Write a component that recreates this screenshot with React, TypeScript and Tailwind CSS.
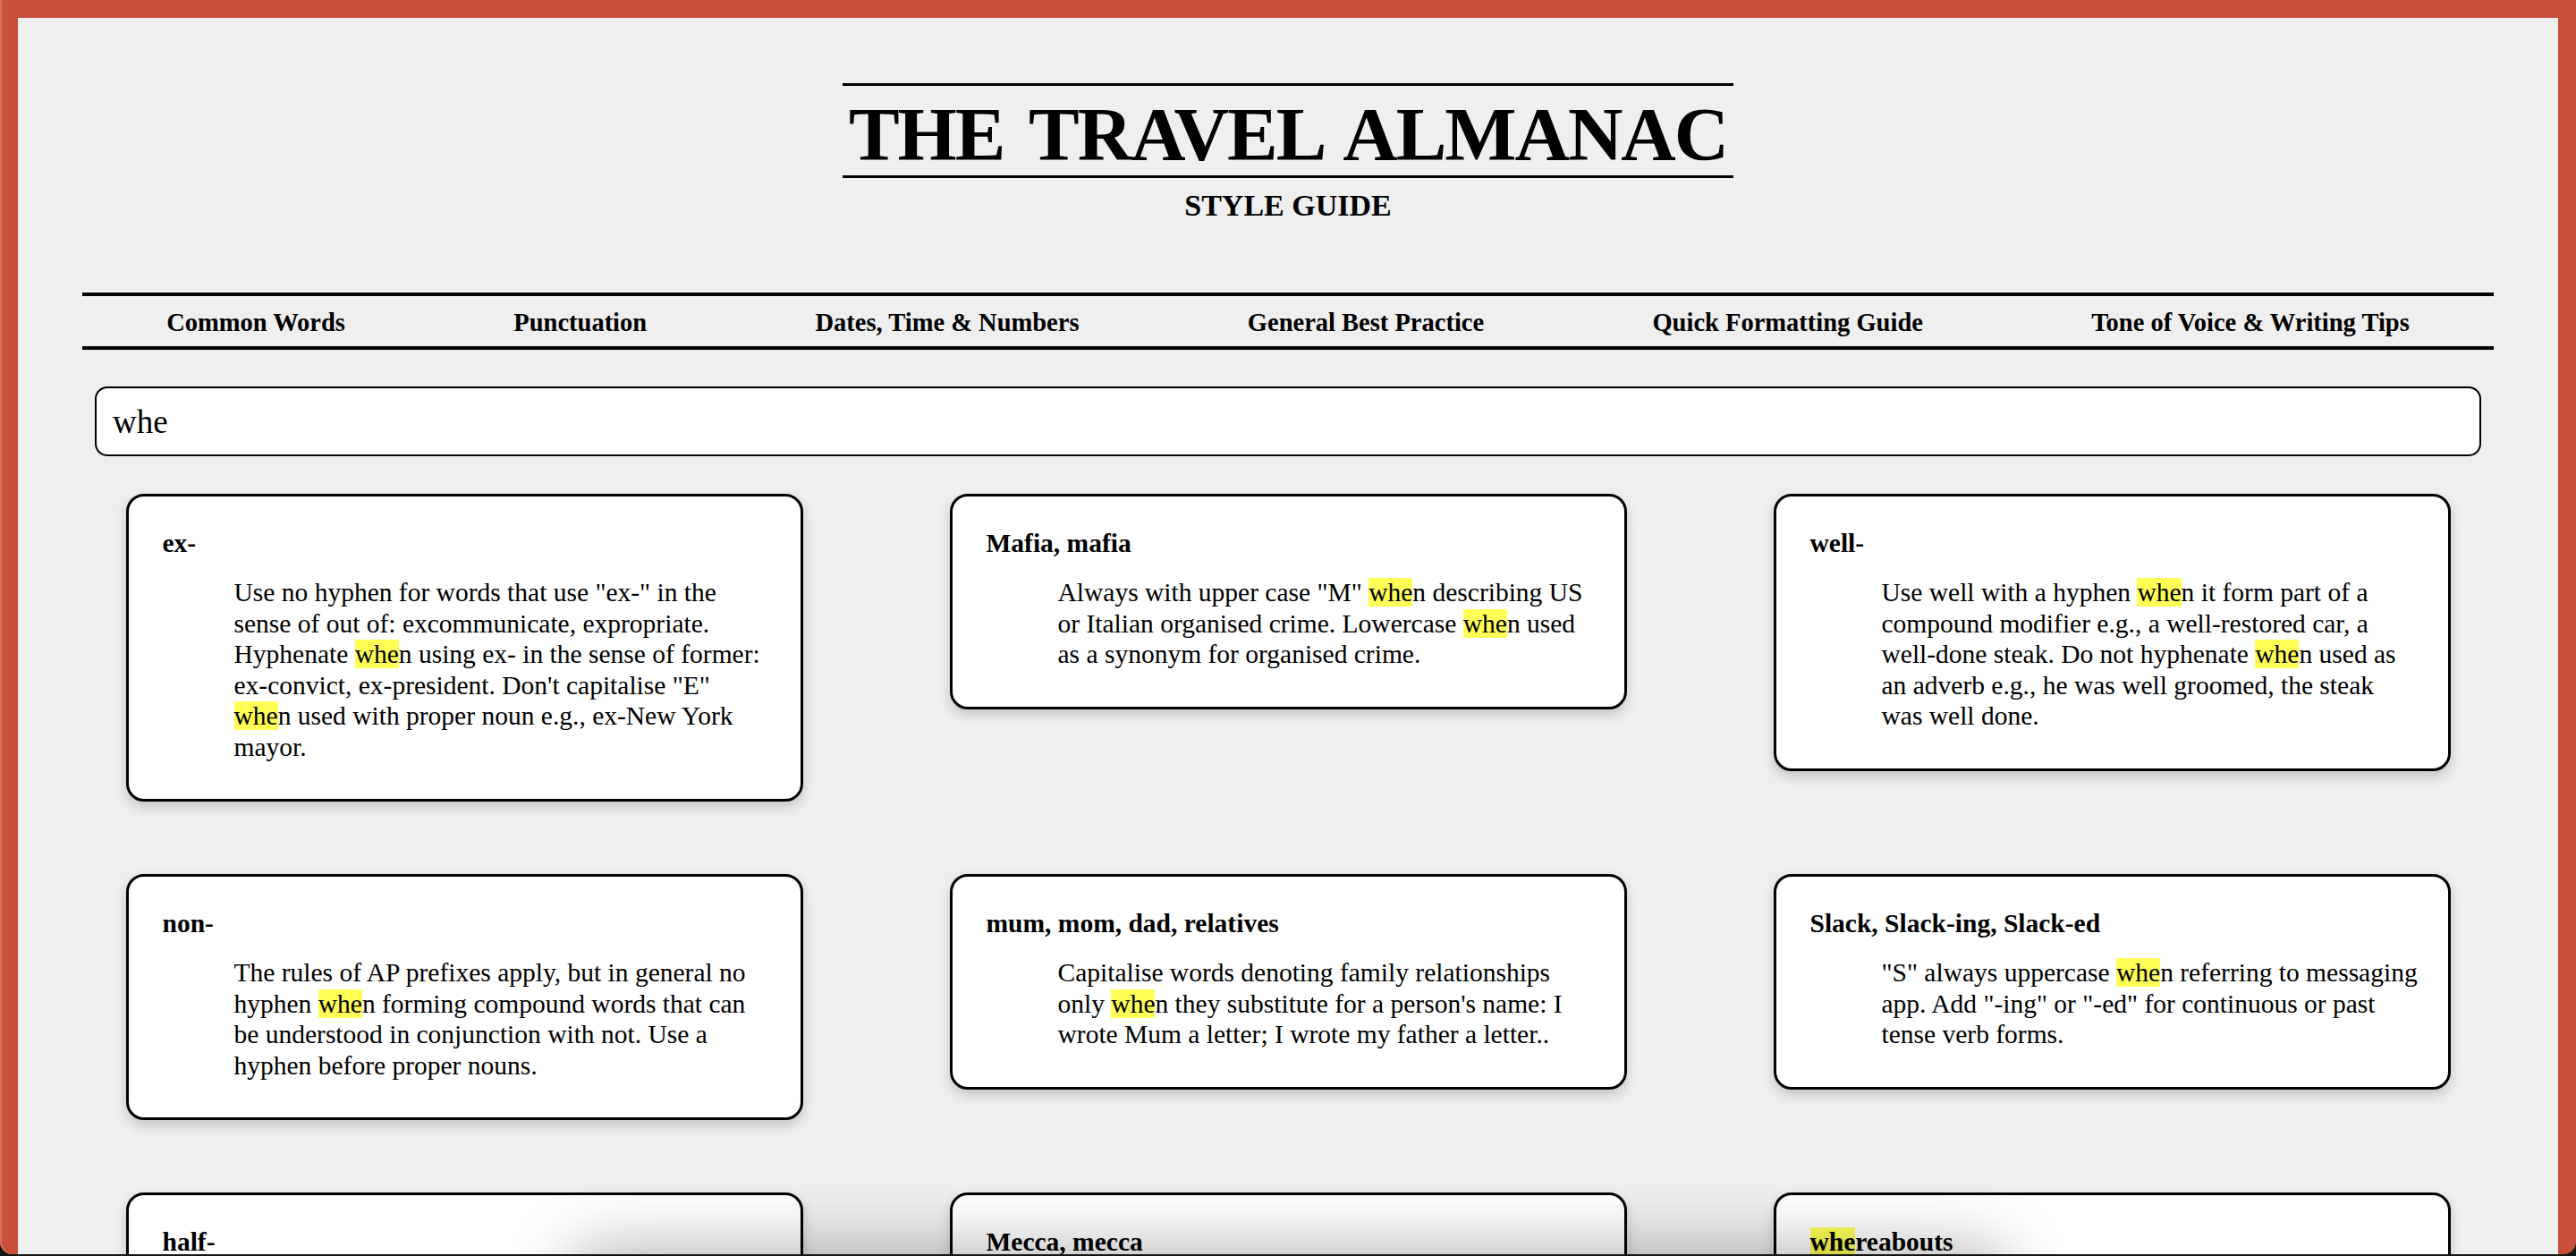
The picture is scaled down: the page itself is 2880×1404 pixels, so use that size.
const entries = [
  {
    title: "ex-",
    lines: [
      'Use no hyphen for words that use "ex-" in the',
      "sense of out of: excommunicate, expropriate.",
      "Hyphenate when using ex- in the sense of former:",
      'ex-convict, ex-president. Don\'t capitalise "E"',
      "when used with proper noun e.g., ex-New York",
      "mayor.",
    ],
  },
  {
    title: "Mafia, mafia",
    lines: [
      'Always with upper case "M" when describing US',
      "or Italian organised crime. Lowercase when used",
      "as a synonym for organised crime.",
    ],
  },
  {
    title: "well-",
    lines: [
      "Use well with a hyphen when it form part of a",
      "compound modifier e.g., a well-restored car, a",
      "well-done steak. Do not hyphenate when used as",
      "an adverb e.g., he was well groomed, the steak",
      "was well done.",
    ],
  },
  {
    title: "non-",
    lines: [
      "The rules of AP prefixes apply, but in general no",
      "hyphen when forming compound words that can",
      "be understood in conjunction with not. Use a",
      "hyphen before proper nouns.",
    ],
  },
  {
    title: "mum, mom, dad, relatives",
    lines: [
      "Capitalise words denoting family relationships",
      "only when they substitute for a person's name: I",
      "wrote Mum a letter; I wrote my father a letter..",
    ],
  },
  {
    title: "Slack, Slack-ing, Slack-ed",
    lines: [
      '"S" always uppercase when referring to messaging',
      'app. Add "-ing" or "-ed" for continuous or past',
      "tense verb forms.",
    ],
  },
  {
    title: "half-",
    lines: [
      "Follow the dictionary. Hyphenate when used as a",
      "compound modifier e.g., a half-baked idea.",
    ],
  },
  {
    title: "Mecca, mecca",
    lines: [
      "Upper case when referring to the holy city.",
      "Lowercase when used to describe a place that",
      "attracts many visitors.",
    ],
  },
  {
    title: "whereabouts",
    lines: ["Takes a singular verb: his whereabouts is", "unknown."],
  },
];

const navItems = [
  "Common Words",
  "Punctuation",
  "Dates, Time & Numbers",
  "General Best Practice",
  "Quick Formatting Guide",
  "Tone of Voice & Writing Tips",
];

function Highlight({ text }: { text: string }) {
  const parts = text.split(/(whe)/i);
  return (
    <>
      {parts.map((p, i) =>
        i % 2 === 1 ? (
          <mark key={i} className="bg-[#ffff55] text-black">
            {p}
          </mark>
        ) : (
          <span key={i}>{p}</span>
        )
      )}
    </>
  );
}

export default function App() {
  return (
    <div className="h-[1404px] overflow-hidden bg-[#161616] font-['Liberation_Serif',serif] text-black">
      <div className="h-[1402px] rounded-b-[14px] bg-[#c9513a] px-[20px] pt-[20px] shadow-[inset_2px_0_0_#d4705d]">
        <div className="relative h-full overflow-hidden bg-[#efefef] px-[72px] pt-[73px]">
          {/* Masthead */}
          <div className="mx-auto w-[996px]">
            <div className="h-[3px] bg-black"></div>
            <h1 className="mt-[10px] whitespace-nowrap text-center text-[85px] font-bold leading-[88px] tracking-[-2px] [word-spacing:10px]">
              THE TRAVEL ALMANAC
            </h1>
            <div className="mt-[2px] h-[3px] bg-black"></div>
            <p className="mt-[14px] text-center text-[34px] font-bold leading-[34px]">STYLE GUIDE</p>
          </div>

          {/* Nav */}
          <nav className="mt-[80px] flex justify-around border-y-4 border-black pb-[10px] pt-[14px]">
            {navItems.map((item) => (
              <span key={item} className="text-[28.5px] font-bold leading-[32px]">
                {item}
              </span>
            ))}
          </nav>

          {/* Search */}
          <div className="mx-[14px] mt-[41px]">
            <input
              readOnly
              value="whe"
              className="h-[78px] w-full rounded-[14px] border-2 border-black bg-white px-[18px] text-[37px] outline-none"
            />
          </div>

          {/* Results */}
          <div className="mt-[42px] grid grid-cols-[repeat(3,757px)] items-start justify-center gap-x-[164px] gap-y-[81px]">
            {entries.map((e) => (
              <div
                key={e.title}
                className="rounded-[20px] border-[3px] border-black bg-white pb-[41px] pl-[38px] pr-[30px] pt-[35px] shadow-[0_6px_14px_rgba(0,0,0,0.18)]"
              >
                <div className="text-[29.5px] font-bold leading-[34.5px]">
                  <Highlight text={e.title} />
                </div>
                <div className="mt-[20.5px] whitespace-nowrap pl-[80px] text-[29.5px] leading-[34.5px]">
                  {e.lines.map((l, i) => (
                    <div key={i}>
                      <Highlight text={l} />
                    </div>
                  ))}
                </div>
              </div>
            ))}
          </div>

          {/* shadow from element sitting just below the window edge */}
          <div className="absolute left-1/2 top-full z-10 h-[200px] w-[1600px] -translate-x-1/2 rounded-[40px] bg-[#efefef] shadow-[0_0_70px_10px_rgba(0,0,0,0.28)]"></div>
        </div>
      </div>
    </div>
  );
}
